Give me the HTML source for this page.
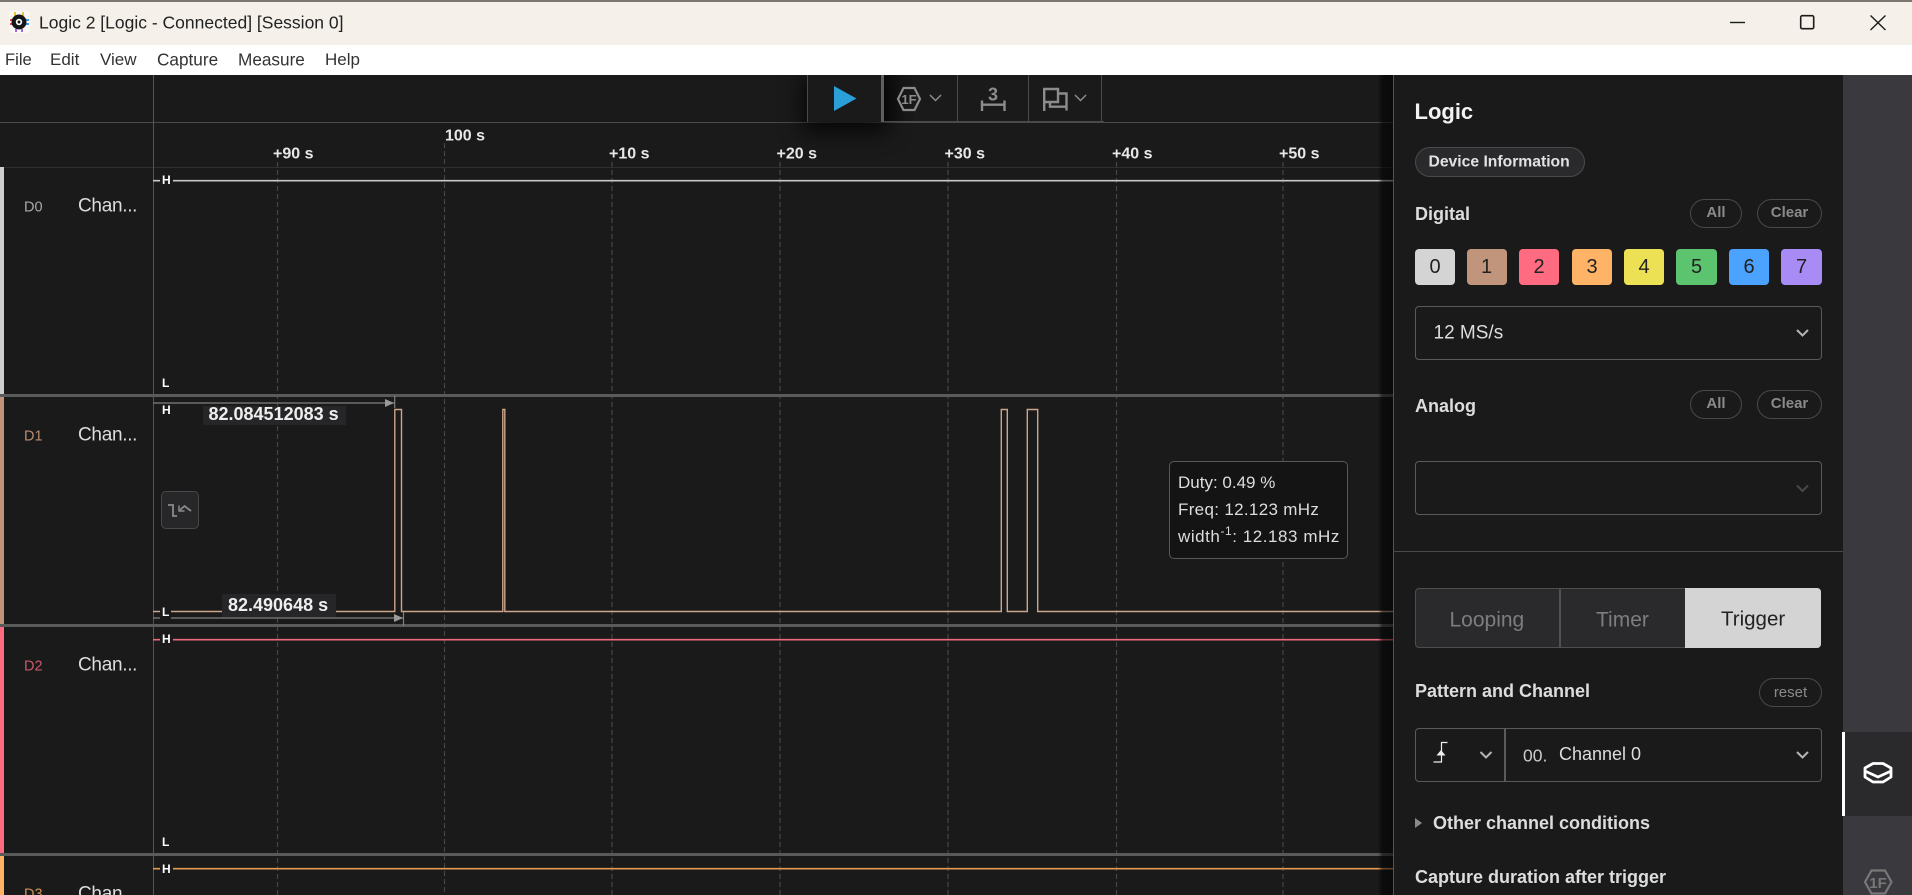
<!DOCTYPE html>
<html><head><meta charset="utf-8"><title>Logic 2</title>
<style>
html,body{margin:0;padding:0;width:1912px;height:895px;overflow:hidden;background:#1a1a1b}
body{position:relative;font-family:"Liberation Sans",sans-serif}
.a{position:absolute;box-sizing:border-box}
.t{position:absolute;white-space:nowrap;transform:translateY(-50%);line-height:1.2}
.b{font-weight:700}
.pill{position:absolute;box-sizing:border-box;border:1px solid #484848;border-radius:15px;color:#8a8a8a;font-weight:700;font-size:15px;text-align:center}
.sw{position:absolute;top:249px;width:40px;height:36px;border-radius:4px;color:#222;font-size:20px;line-height:37px;text-align:center}
.sel{position:absolute;box-sizing:border-box;border:1px solid #5a5a5a;border-radius:4px}
.hl{position:absolute;color:#fff;font-weight:700;font-size:12px;line-height:14px;background:#1a1a1b;padding:0 2px;transform:translateY(-50%)}
.h3{color:#ddd;font-weight:700;font-size:18px}
</style></head>
<body>
<!-- title bar -->
<div class="a" style="left:0;top:0;width:1912px;height:2px;background:#7b776f"></div>
<div class="a" style="left:0;top:2px;width:1912px;height:43px;background:#f5f1ea"></div>
<div class="a" style="left:0;top:45px;width:1912px;height:30px;background:#fff"></div>
<svg class="a" style="left:0;top:0" width="60" height="45">
<rect x="9" y="11" width="21" height="22" rx="4" fill="#fbf8f6"/>
<rect x="14" y="12" width="2" height="4" fill="#e8c23a"/><rect x="22" y="12" width="2" height="4" fill="#e8c23a"/>
<rect x="10" y="19" width="4" height="2" fill="#e0483e"/><rect x="10" y="23" width="4" height="2" fill="#e0483e"/>
<rect x="25" y="19" width="4" height="2" fill="#3f9ee8"/><rect x="25" y="23" width="4" height="2" fill="#3f9ee8"/>
<rect x="15" y="29" width="2" height="3" fill="#a06ad8"/><rect x="21" y="29" width="2" height="3" fill="#a06ad8"/>
<circle cx="19" cy="22" r="7.5" fill="#16161a"/><circle cx="19" cy="22" r="3.2" fill="#fff"/><circle cx="19" cy="22" r="1.5" fill="#16161a"/>
</svg>
<div class="t" style="left:39px;top:22.5px;font-size:17.5px;color:#222">Logic 2 [Logic - Connected] [Session 0]</div>
<svg class="a" style="left:1720px;top:5px" width="180" height="35" fill="none" stroke="#1c1c1c">
<path d="M10 17.5H25" stroke-width="1.4"/>
<rect x="80.7" y="10.7" width="13" height="13" rx="1.5" stroke-width="1.6"/>
<path d="M150.5 10.5L165.5 25M165.5 10.5L150.5 25" stroke-width="1.4"/>
</svg>
<div class="t" style="left:5px;top:60px;font-size:16.6px;color:#333">File</div>
<div class="t" style="left:50px;top:60px;font-size:17px;color:#333">Edit</div>
<div class="t" style="left:100px;top:60px;font-size:17px;color:#333">View</div>
<div class="t" style="left:157px;top:60px;font-size:17.2px;color:#333">Capture</div>
<div class="t" style="left:238px;top:60px;font-size:17.2px;color:#333">Measure</div>
<div class="t" style="left:325px;top:60px;font-size:17px;color:#333">Help</div>

<!-- main waveform background & lines -->
<div class="a" style="left:0;top:75px;width:1393px;height:820px;background:#1a1a1b"></div>
<svg class="a" style="left:0;top:75px" width="1393" height="820" viewBox="0 75 1393 820" fill="none">
<g stroke="#454545" stroke-width="1.2" stroke-dasharray="5 3">
<path d="M277.5 162V895M612 162V895M780 162V895M948 162V895M1116.5 162V895M1283 162V895"/>
<path d="M444.5 143V895"/>
</g>
<path d="M0 122.5H1393" stroke="#4a4a4a"/>
<path d="M0 167.5H1393" stroke="#303030"/>
<path d="M153.5 75V895" stroke="#555"/>
<g fill="#5a5a5a"><rect x="0" y="394" width="1393" height="3"/><rect x="0" y="624" width="1393" height="3"/><rect x="0" y="853" width="1393" height="3"/></g>
<path d="M153 180.7H1393" stroke="#c8c8c8" stroke-width="1.6"/>
<path d="M153 639.7H1393" stroke="#f06a7e" stroke-width="1.6"/>
<path d="M153 868.7H1393" stroke="#e29a50" stroke-width="1.6"/>
<path d="M153 611.5H394.8V409.5H401.5V611.5H502.8V409.5H504.8V611.5H1001.3V409.5H1007.3V611.5H1027.3V409.5H1037.7V611.5H1393" stroke="#cda58b" stroke-width="1.4"/>
<!-- measurement arrows -->
<path d="M153 403H394.5M394.7 396V408" stroke="#808080" stroke-width="1.2"/><path d="M385 399L394 403L385 407Z" fill="#9a9a9a"/>
<path d="M153 618H403M403.5 612V626" stroke="#808080" stroke-width="1.2"/><path d="M394 614L403 618L394 622Z" fill="#9a9a9a"/>
</svg>
<!-- channel colour bars -->
<div class="a" style="left:0;top:167px;width:3.5px;height:227px;background:#cfcfcf"></div>
<div class="a" style="left:0;top:397px;width:3.5px;height:227px;background:#c0957c"></div>
<div class="a" style="left:0;top:627px;width:3.5px;height:226px;background:#ff6b81"></div>
<div class="a" style="left:0;top:856px;width:3.5px;height:39px;background:#ffb366"></div>
<!-- channel labels -->
<div class="t" style="left:24px;top:208px;font-size:14.5px;color:#a8a8a8">D0</div>
<div class="t" style="left:78px;top:207px;font-size:19px;letter-spacing:-.3px;color:#ddd">Chan...</div>
<div class="t" style="left:24px;top:436.5px;font-size:14.5px;color:#b88d75">D1</div>
<div class="t" style="left:78px;top:436px;font-size:19px;letter-spacing:-.3px;color:#ddd">Chan...</div>
<div class="t" style="left:24px;top:666.5px;font-size:14.5px;color:#c85a6c">D2</div>
<div class="t" style="left:78px;top:666px;font-size:19px;letter-spacing:-.3px;color:#ddd">Chan...</div>
<div class="t" style="left:24px;top:895px;font-size:14.5px;color:#cc9255">D3</div>
<div class="t" style="left:78px;top:895px;font-size:19px;letter-spacing:-.3px;color:#ddd">Chan...</div>
<!-- H / L -->
<div class="hl" style="left:160px;top:180px">H</div>
<div class="t b" style="left:162px;top:383px;font-size:12px;color:#fff">L</div>
<div class="t b" style="left:162px;top:410px;font-size:12px;color:#fff">H</div>
<div class="hl" style="left:160px;top:612px">L</div>
<div class="hl" style="left:160px;top:638.5px">H</div>
<div class="t b" style="left:162px;top:842px;font-size:12px;color:#fff">L</div>
<div class="hl" style="left:160px;top:868.5px">H</div>
<!-- ruler -->
<div class="t b" style="left:273px;top:153.5px;font-size:16px;color:#e8e8e8">+90 s</div>
<div class="t b" style="left:445px;top:136px;font-size:16px;color:#e8e8e8">100 s</div>
<div class="t b" style="left:609px;top:153.5px;font-size:16px;color:#e8e8e8">+10 s</div>
<div class="t b" style="left:776.5px;top:153.5px;font-size:16px;color:#e8e8e8">+20 s</div>
<div class="t b" style="left:944.5px;top:153.5px;font-size:16px;color:#e8e8e8">+30 s</div>
<div class="t b" style="left:1112px;top:153.5px;font-size:16px;color:#e8e8e8">+40 s</div>
<div class="t b" style="left:1279px;top:153.5px;font-size:16px;color:#e8e8e8">+50 s</div>
<!-- measurement labels -->
<div class="a" style="left:203px;top:406px;width:143px;height:19px;background:#262628"></div>
<div class="t b" style="left:208.5px;top:415px;font-size:18px;color:#eee">82.084512083 s</div>
<div class="a" style="left:222px;top:594px;width:114px;height:23px;background:#262628"></div>
<div class="t b" style="left:228px;top:606px;font-size:18px;color:#eee">82.490648 s</div>
<!-- button -->
<div class="a" style="left:161px;top:491px;width:38px;height:38px;background:#272729;border:1px solid #484848;border-radius:5px"></div>
<svg class="a" style="left:161px;top:491px" width="38" height="38" fill="none" stroke="#8a8a8a" stroke-width="1.8"><path d="M7 14H12V25H16"/><path d="M19 19L23.5 15L30 20"/><path d="M18 14.5V20H23.5" stroke-width="1.5"/></svg>
<!-- tooltip -->
<div class="a" style="left:1169px;top:461px;width:179px;height:98px;background:#141415;border:1px solid #585858;border-radius:5px"></div>
<div class="t" style="left:1178px;top:483px;font-size:17px;color:#ddd">Duty: 0.49 %</div>
<div class="t" style="left:1178px;top:509.5px;font-size:17px;letter-spacing:.32px;color:#ddd">Freq: 12.123 mHz</div>
<div class="t" style="left:1178px;top:536.5px;font-size:17px;letter-spacing:.55px;color:#ddd">width<sup style="font-size:12px;line-height:0">-1</sup>: 12.183 mHz</div>

<!-- toolbar -->
<div class="a" style="left:760px;top:75px;width:170px;height:100px;overflow:hidden">
  <div class="a" style="left:47px;top:0;width:77px;height:47px;background:#1a1a1b;box-shadow:0 6px 22px 4px rgba(0,0,0,.75)"></div>
</div>
<div class="a" style="left:884px;top:75px;width:30px;height:47px;background:linear-gradient(90deg,rgba(0,0,0,.45),rgba(0,0,0,0))"></div>
<div class="a" style="left:884px;top:76px;height:46px;width:220px;border-bottom:1px solid #4a4a4a"></div>
<svg class="a" style="left:800px;top:75px" width="310" height="48" viewBox="800 75 310 48" fill="none">
<path d="M807.5 75V122M957.5 75V122M1028.5 75V122M1101.5 75V122" stroke="#4a4a4a"/>
<rect x="881" y="75" width="3" height="47" fill="#5e5e5e"/>
<path d="M834 86L856.5 98.5L834 111Z" fill="#2a9fd8"/>
<path d="M898 99L903.5 88H914.5L920 99L914.5 110H903.5Z" stroke="#8c8c8c" stroke-width="2.2"/>
<text x="909" y="104" text-anchor="middle" font-family="Liberation Sans" font-size="13" font-weight="700" fill="#8c8c8c">1F</text>
<path d="M930 95L935.5 100.5L941 95M1075 95L1080.5 100.5L1086 95" stroke="#8c8c8c" stroke-width="1.5"/>
<text x="993" y="100.5" text-anchor="middle" font-family="Liberation Sans" font-size="18" font-weight="700" fill="#8c8c8c">3</text>
<path d="M982 100.5V111M1004.5 100.5V111M982 104.7H1004.5" stroke="#8c8c8c" stroke-width="2.4"/>
<path d="M1044.2 111V89H1058V102H1044.2" stroke="#8c8c8c" stroke-width="2.4"/>
<path d="M1058 93.5H1066.5V110.5M1050 102V106.7H1066.5" stroke="#8c8c8c" stroke-width="2.4"/>
</svg>

<!-- panel shadow -->
<div class="a" style="left:1378px;top:75px;width:15px;height:820px;background:linear-gradient(90deg,rgba(0,0,0,0),rgba(0,0,0,.55) 30%,rgba(0,0,0,.62))"></div>

<!-- right panel -->
<div class="a" style="left:1393px;top:75px;width:450px;height:820px;background:#1a1a1b;border-left:1px solid #555"></div>
<div class="t b" style="left:1414.5px;top:112px;font-size:22px;color:#f2f2f2">Logic</div>
<div class="a" style="left:1415px;top:147px;width:170px;height:30px;background:#2a2a2d;border:1px solid #4a4a4d;border-radius:15px"></div>
<div class="t b" style="left:1428.5px;top:163px;font-size:15.7px;color:#e2e2e2">Device Information</div>
<div class="t h3" style="left:1415px;top:215px">Digital</div>
<div class="pill" style="left:1690px;top:199px;width:52px;height:29px;line-height:26px">All</div>
<div class="pill" style="left:1757px;top:199px;width:65px;height:29px;line-height:26px">Clear</div>
<div class="sw" style="left:1415px;background:#d4d4d4">0</div>
<div class="sw" style="left:1466.5px;background:#c0957c">1</div>
<div class="sw" style="left:1519px;background:#ff6b81">2</div>
<div class="sw" style="left:1572px;background:#ffb366">3</div>
<div class="sw" style="left:1624px;background:#ece154">4</div>
<div class="sw" style="left:1676px;width:41px;background:#5cc46e">5</div>
<div class="sw" style="left:1729px;background:#4ba3ff">6</div>
<div class="sw" style="left:1781px;width:41px;background:#a88bf5">7</div>
<div class="sel" style="left:1415px;top:306px;width:407px;height:54px"></div>
<div class="t" style="left:1433.5px;top:333.5px;font-size:19px;color:#ddd">12 MS/s</div>
<div class="t h3" style="left:1415px;top:406.5px">Analog</div>
<div class="pill" style="left:1690px;top:390px;width:52px;height:29px;line-height:26px">All</div>
<div class="pill" style="left:1757px;top:390px;width:65px;height:29px;line-height:26px">Clear</div>
<div class="sel" style="left:1415px;top:461px;width:407px;height:54px"></div>
<div class="a" style="left:1393px;top:551px;width:450px;height:1px;background:#4a4a4a"></div>
<!-- tabs -->
<div class="a" style="left:1415px;top:588px;width:406px;height:60px;background:#2a2a2d;border:1px solid #4e4e4e;border-radius:4px"></div>
<div class="a" style="left:1559px;top:588px;width:2px;height:60px;background:#505052"></div>
<div class="a" style="left:1685px;top:588px;width:136px;height:60px;background:#d4d4d4;border-radius:0 4px 4px 0"></div>
<div class="t" style="left:1449.5px;top:619.5px;font-size:21px;color:#7d7d7d">Looping</div>
<div class="t" style="left:1596px;top:619.5px;font-size:21px;color:#7d7d7d">Timer</div>
<div class="t" style="left:1721px;top:619.5px;font-size:20.5px;color:#222">Trigger</div>
<div class="t h3" style="left:1415px;top:692px">Pattern and Channel</div>
<div class="pill" style="left:1759px;top:678px;width:63px;height:29px;line-height:28px;font-weight:400">reset</div>
<div class="sel" style="left:1415px;top:728px;width:407px;height:54px"></div>
<div class="a" style="left:1504px;top:728px;width:2px;height:54px;background:#5a5a5a"></div>
<div class="t" style="left:1523px;top:755.5px;font-size:17.5px;color:#ccc">00.</div>
<div class="t" style="left:1559px;top:755px;font-size:18px;color:#ddd">Channel 0</div>
<div class="t h3" style="left:1433px;top:823.5px;">Other channel conditions</div>
<div class="t h3" style="left:1415px;top:878px;">Capture duration after trigger</div>
<svg class="a" style="left:1393px;top:75px" width="450" height="820" viewBox="1393 75 450 820" fill="none">
<path d="M1797 330L1802.5 335.5L1808 330M1797 752L1802.5 757.5L1808 752M1480.5 752L1486 757.5L1491.5 752" stroke="#b5b5b5" stroke-width="2"/>
<path d="M1797 485.5L1802.5 491L1808 485.5" stroke="#484848" stroke-width="2"/>
<path d="M1433.5 762H1441.5V742.5H1447.5" stroke="#eee" stroke-width="1.2"/>
<path d="M1441 750L1445.5 755.5H1436.5Z" fill="#eee"/>
<path d="M1415 818L1422 823L1415 828Z" fill="#8a8a8a"/>
</svg>

<!-- sidebar -->
<div class="a" style="left:1843px;top:75px;width:69px;height:820px;background:#3a3a3e"></div>
<div class="a" style="left:1842px;top:732px;width:70px;height:84px;background:#2a2a2c"></div>
<div class="a" style="left:1842px;top:732px;width:3px;height:84px;background:#fff"></div>
<svg class="a" style="left:1843px;top:740px" width="69" height="155" viewBox="1843 740 69 155" fill="none">
<path d="M1873 763.5H1883L1891 768V777L1883 782H1873L1865 777V768Z" stroke="#fff" stroke-width="2.8" stroke-linejoin="round"/>
<path d="M1866 771.5L1878 777L1890 771.5" stroke="#fff" stroke-width="2.8"/>
<path d="M1865 882L1871.5 870.5H1885L1891.5 882L1885 893.5H1871.5Z" stroke="#777" stroke-width="2.2"/>
<text x="1878" y="888" text-anchor="middle" font-family="Liberation Sans" font-size="15" font-weight="700" fill="#777">1F</text>
</svg>
</body></html>
